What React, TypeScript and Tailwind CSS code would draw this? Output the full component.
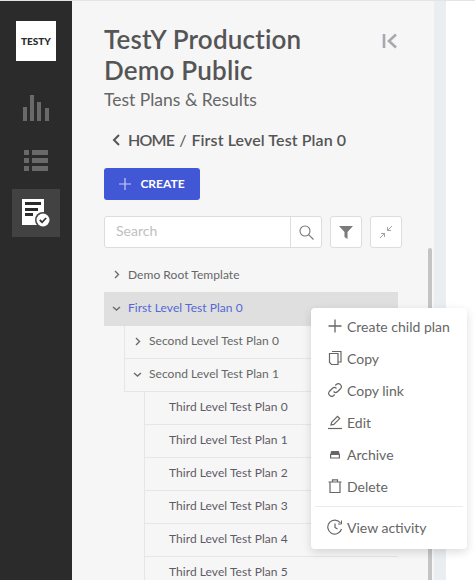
import React from "react";

const F = { fontFamily: '"Lato", "Liberation Sans", sans-serif' };

function Chevron({ open }: { open?: boolean }) {
  return (
    <svg width="9" height="9" viewBox="0 0 9 9" fill="none" stroke="#6b6b6b" strokeWidth="1.4" className="shrink-0">
      {open ? <path d="M1 3l3.500 3L8 3" /> : <path d="M3 1l3.500 3.500L3 8" />}
    </svg>
  );
}

function Row({ label, indent, chevron, open, blue, selected }: { label: string; indent: 0 | 1 | 2; chevron?: boolean; open?: boolean; blue?: boolean; selected?: boolean }) {
  const ml = indent === 0 ? "ml-0" : indent === 1 ? "ml-[20px]" : "ml-[40px]";
  const borders = indent === 0 ? "" : "border-l border-b border-[#e6e6e6]";
  const bg = selected ? "bg-[#dfdfdf] h-[34px]" : "h-[33px]";
  return (
    <div className={`${ml} ${borders} ${bg} pb-[2px] flex items-center text-[12px] leading-none tracking-[0.05px] ${blue ? "text-[#5468d4]" : indent === 2 ? "text-[#5f5a66]" : "text-[#666666]"}`}>
      <span className="w-[24px] flex justify-center shrink-0 pl-[1px]">{chevron && <Chevron open={open} />}</span>
      <span>{label}</span>
    </div>
  );
}

const menuIcon = "w-[16px] h-[16px] shrink-0";
const stroke = { fill: "none", stroke: "#666666", strokeWidth: 1.2 };

const items: [string, React.ReactNode][] = [
  ["Create child plan", <svg className={menuIcon} viewBox="0 0 16 16" {...stroke}><path d="M8 1.500v13M1.500 8h13" strokeWidth="1.300" /></svg>],
  ["Copy", <svg className={menuIcon} viewBox="0 0 16 16" {...stroke}><path d="M2.500 3.500h8.500v11h-6.500l-2-2z" /><path d="M5 1.500h9v10.500h-3" /></svg>],
  ["Copy link", <svg className={menuIcon} viewBox="0 0 16 16" {...stroke}><path d="M6.500 9.500a3 3 0 0 0 4.200 0l3-3a3 3 0 0 0-4.200-4.200l-1.200 1.200" /><path d="M9.500 6.500a3 3 0 0 0-4.200 0l-3 3a3 3 0 0 0 4.200 4.200l1.200-1.200" /></svg>],
  ["Edit", <svg className={menuIcon} viewBox="0 0 16 16" {...stroke}><path d="M4 11l.6-2.800L10.500 2.400l2.200 2.200-5.900 5.800z" /><path d="M1 14.500h14" /></svg>],
  ["Archive", <svg className={menuIcon} viewBox="0 0 16 16" {...stroke}><path d="M4 8l.6-2.500h6.800L12 8z" fill="#666666" /><path d="M3.600 8.500h8.800v3.500H3.600z" /></svg>],
  ["Delete", <svg className={menuIcon} viewBox="0 0 16 16" {...stroke}><path d="M1.500 4h13M5.500 4V1.800h5V4M3 4v10.500h10V4" /></svg>],
];

export default function App() {
  return (
    <div className="relative w-[475px] h-[580px] overflow-hidden bg-white flex border-t border-[#e4e4e4]" style={F}>
      <aside className="w-[72px] shrink-0 bg-[#2b2b2b] flex flex-col items-center pt-[20px]">
        <div className="w-[40px] h-[40px] bg-white flex items-center justify-center text-[10px] font-black text-[#2b2b2b]">TESTY</div>
        <div className="w-[48px] h-[48px] mt-[24px] flex items-center justify-center">
          <svg width="28" height="28" viewBox="0 0 28 28" fill="#696969"><rect x="1" y="12" width="4" height="14" /><rect x="8" y="0" width="4" height="26" /><rect x="15" y="7" width="4" height="19" /><rect x="23" y="13" width="4" height="13" /></svg>
        </div>
        <div className="w-[48px] h-[48px] mt-[4px] flex items-center justify-center">
          <svg width="24" height="22" viewBox="0 0 24 22" fill="#696969"><rect x="0" y="0" width="5" height="5" /><rect x="8" y="0" width="16" height="5" /><rect x="0" y="8" width="5" height="5" /><rect x="8" y="8" width="16" height="5" /><rect x="0" y="16" width="5" height="5" /><rect x="8" y="16" width="16" height="5" /></svg>
        </div>
        <div className="w-[48px] h-[48px] mt-[4px] bg-[#424242] flex items-center justify-center">
          <svg width="30" height="30" viewBox="0 0 30 30">
            <rect x="1" y="1" width="22" height="26" fill="#fff" />
            <rect x="4" y="4" width="16" height="3" fill="#2b2b2b" />
            <rect x="4" y="10" width="13" height="3" fill="#2b2b2b" />
            <rect x="4" y="15" width="8" height="3" fill="#2b2b2b" />
            <circle cx="22" cy="22" r="8" fill="#424242" />
            <circle cx="22" cy="22" r="6.500" fill="#fff" />
            <path d="M18.800 22l2.300 2.300 4-4.300" stroke="#333" strokeWidth="1.800" fill="none" />
          </svg>
        </div>
      </aside>

      <main className="w-[362px] shrink-0 bg-[#f6f6f6] pl-[32px] pr-[36px] relative">
        <div className="flex justify-between items-start pt-[23px]">
          <h1 className="text-[26px] leading-[31px] font-semibold text-[#555555] tracking-[0.2px] w-[240px]">TestY Production Demo Public</h1>
          <svg width="16" height="16" viewBox="0 0 16 16" fill="none" stroke="#a8a8b0" strokeWidth="2.600" className="mt-[9px]"><path d="M2 1v14" /><path d="M14 1.500L7 8l7 6.500" /></svg>
        </div>
        <p className="text-[17.5px] leading-[20px] text-[#666666] mt-[4px]">Test Plans &amp; Results</p>
        <div className="flex items-center mt-[20px] pl-[8px] h-[20px] text-[16px] font-semibold text-[#555555]">
          <svg width="8" height="12" viewBox="0 0 8 12" fill="none" stroke="#555" strokeWidth="2" className="mr-[8px]"><path d="M7 1L2 6l5 5" /></svg>
          <span className="tracking-[-0.8px]">HOME</span>
          <span className="mx-[5px] font-normal">/</span>
          <span className="tracking-[0.1px]">First Level Test Plan 0</span>
        </div>
        <button className="mt-[18px] w-[96px] h-[32px] rounded-[3px] bg-[#4257d6] flex items-center justify-center gap-[9px] text-white text-[12px] font-bold">
          <svg width="12" height="12" viewBox="0 0 12 12" stroke="#c5ccf2" strokeWidth="1.200"><path d="M6 0v12M0 6h12" /></svg>
          CREATE
        </button>
        <div className="flex mt-[16px] h-[32px] w-[298px] gap-[8px]">
          <div className="w-[218px] shrink-0 flex bg-white border border-[#dddddd] rounded-[3px]">
            <span className="flex-1 pl-[11px] text-[14px] leading-[28px] text-[#c0c0c0]">Search</span>
            <span className="w-[31px] border-l border-[#dddddd] flex items-center justify-center">
              <svg width="15" height="15" viewBox="0 0 15 15" fill="none" stroke="#777" strokeWidth="1.100"><circle cx="6" cy="6" r="5" /><path d="M9.600 9.600L14.500 14.500" /></svg>
            </span>
          </div>
          <div className="w-[32px] shrink-0 bg-white border border-[#dddddd] rounded-[3px] flex items-center justify-center">
            <svg width="14" height="13" viewBox="0 0 14 13" fill="#7b7b7b"><path d="M0 0h14L8.500 6v7L5.500 11V6z" /></svg>
          </div>
          <div className="w-[32px] shrink-0 bg-white border border-[#dddddd] rounded-[3px] flex items-center justify-center">
            <svg width="14" height="14" viewBox="0 0 14 14" fill="none" stroke="#999" strokeWidth="0.900"><path d="M13 1L8.500 5.500M8.500 2v3.500H12M1 13l4.500-4.500M2 8.500h3.500V12" /></svg>
          </div>
        </div>
        <div className="mt-[11px] w-[294px]">
          <Row label="Demo Root Template" indent={0} chevron />
          <Row label="First Level Test Plan 0" indent={0} chevron open blue selected />
          <Row label="Second Level Test Plan 0" indent={1} chevron />
          <Row label="Second Level Test Plan 1" indent={1} chevron open />
          {[0, 1, 2, 3, 4, 5].map((n) => (
            <Row key={n} label={`Third Level Test Plan ${n}`} indent={2} />
          ))}
        </div>
        <div className="absolute left-[356px] top-[247px] w-[4px] h-[333px] bg-[#c4c4c4] rounded-t-[2px]" />
      </main>
      <div className="w-[12px] shrink-0 bg-[#ebeef0]" />

      <div className="absolute left-[311px] top-[307px] w-[156px] h-[241px] bg-white rounded-[4px] shadow-[0_3px_10px_rgba(0,0,0,0.14)] px-[4px] pt-[2px] text-[14px] text-[#666666]">
        {items.map(([label, icon]) => (
          <div key={label} className="h-[32px] flex items-center gap-[4px] pl-[12px]">
            {icon}
            <span>{label}</span>
          </div>
        ))}
        <div className="h-px bg-[#ececec] mt-[4px]" />
        <div className="h-[32px] mt-[4px] flex items-center gap-[4px] pl-[12px]">
          <svg className={menuIcon} viewBox="0 0 16 16" {...stroke}><path d="M13.500 4A7 7 0 1 0 14.500 10" /><path d="M8 4.500V8.500l2.500 1.500" /><path d="M14.500 1.500V5H11" strokeWidth="1" /></svg>
          <span>View activity</span>
        </div>
      </div>
    </div>
  );
}
